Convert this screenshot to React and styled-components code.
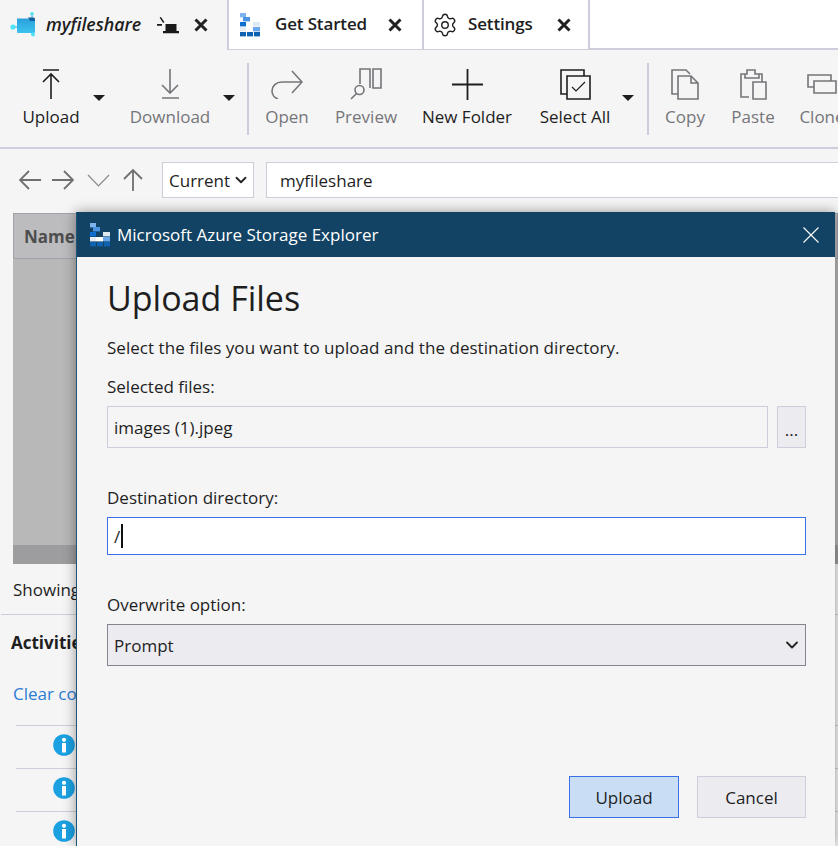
import React from "react";
import styled, { createGlobalStyle } from "styled-components";
import { Settings, ChevronDown } from "lucide-react";

const GlobalStyle = createGlobalStyle`
  html, body {
    margin: 0;
    padding: 0;
    background: #f5f5f5;
  }
  * {
    box-sizing: border-box;
  }
`;

const Page = styled.div`
  position: relative;
  width: 838px;
  height: 846px;
  overflow: hidden;
  background: #f5f5f5;
  color: #1e1e1e;
  font-family: "Open Sans", "Noto Sans", sans-serif;
  font-size: 17px;
`;

const TabBar = styled.div`
  display: flex;
  height: 50px;
  background: #fff;
  border-bottom: 2px solid #cdcddc;
`;

const Tab = styled.div`
  display: flex;
  align-items: center;
  flex: none;
  width: ${(p) => p.$w}px;
  height: ${(p) => (p.$active ? 50 : 49)}px;
  padding-left: ${(p) => p.$pad}px;
  background: ${(p) => (p.$active ? "#f5f5f5" : "#fff")};
  border-left: ${(p) => (p.$active ? "none" : "2px solid #cdcddc")};
  border-right: ${(p) => (p.$edge ? "2px solid #cdcddc" : "none")};
`;

const TabTitle = styled.span`
  width: ${(p) => p.$w}px;
  margin-left: ${(p) => p.$ml}px;
  font-size: ${(p) => (p.$italic ? 17.8 : 17)}px;
  font-weight: 600;
  font-style: ${(p) => (p.$italic ? "italic" : "normal")};
  letter-spacing: ${(p) => (p.$italic ? 0 : -0.15)}px;
  white-space: nowrap;
  margin-top: -2px;
`;

const TabGap = styled.span`
  width: 14px;
`;

const Toolbar = styled.div`
  display: flex;
  height: 99px;
  padding-left: 12px;
  border-bottom: 2px solid #cdcddc;
`;

const ToolButton = styled.div`
  display: flex;
  flex: none;
  flex-direction: column;
  align-items: center;
  width: ${(p) => p.$w}px;
  margin-left: ${(p) => p.$ml || 0}px;
  padding-top: 18px;
  color: ${(p) => (p.$off ? "#75757a" : "#1e1e1e")};
  white-space: nowrap;
`;

const ToolIcon = styled.div`
  display: flex;
  align-items: center;
  justify-content: center;
  height: 32px;
`;

const ToolLabel = styled.div`
  margin-top: 5px;
  line-height: 24px;
`;

const Caret = styled.div`
  flex: none;
  width: 18px;
  padding-top: 45px;
  display: flex;
  justify-content: center;

  &::after {
    content: "";
    border-left: 6px solid transparent;
    border-right: 6px solid transparent;
    border-top: 6px solid #1e1e1e;
    height: 0;
  }
`;

const ToolSep = styled.div`
  flex: none;
  width: 2px;
  height: 72px;
  margin: 13px 9px 0 ${(p) => p.$ml}px;
  background: #cdcddc;
`;

const AddressBar = styled.div`
  display: flex;
  align-items: center;
  height: 64px;
  padding: 0 0 2px 19px;
`;

const NavIcons = styled.div`
  display: flex;
  align-items: center;
  width: 143px;
`;

const NavSvg = styled.svg`
  flex: none;
  margin-left: ${(p) => p.$ml || 0}px;
`;

const ScopeSelect = styled.div`
  display: flex;
  align-items: center;
  gap: 2px;
  flex: none;
  width: 92px;
  height: 36px;
  padding-left: 6px;
  background: #fff;
  border: 1px solid #cdcddc;
`;

const PathInput = styled.div`
  display: flex;
  align-items: center;
  flex: 1;
  height: 36px;
  margin-left: 12px;
  padding-left: 13px;
  background: #fff;
  border: 1px solid #cdcddc;
  border-right: none;
`;

const Table = styled.div`
  display: flex;
  flex-direction: column;
  height: 351px;
  margin-left: 13px;
  background: #b8b8b8;
`;

const TableHead = styled.div`
  display: flex;
  align-items: center;
  height: 46px;
  padding: 1px 0 0 10px;
  background: #bcbcbe;
  border: 1px solid #a2a2a8;
  font-weight: 700;
  color: #4e4e4e;
`;

const TableBody = styled.div`
  flex: 1;
`;

const TableScroll = styled.div`
  height: 19px;
  background: #9d9da0;
`;

const Status = styled.div`
  height: 51px;
  padding: 14px 0 0 12px;
  line-height: 24px;
  border-bottom: 1px solid #cdcddc;
  margin-left: 1px;
`;

const ActivityTitle = styled.div`
  margin: 16px 0 0 11px;
  line-height: 24px;
  font-weight: 700;
  white-space: nowrap;
`;

const ClearLink = styled.div`
  margin: 27px 0 0 13px;
  line-height: 24px;
  color: #2b7cd3;
  white-space: nowrap;
`;

const ActivityList = styled.div`
  margin: 19px 0 0 16px;
`;

const ActivityRow = styled.div`
  height: 43px;
  padding: 8px 0 0 37px;
  border-top: 1px solid #cdcddc;
`;

const Dialog = styled.div`
  position: absolute;
  left: 76px;
  top: 212px;
  width: 759px;
  height: 634px;
  display: flex;
  flex-direction: column;
  background: #f5f5f5;
  border-left: 1px solid #1d5578;
  box-shadow: 0 0 12px rgba(0, 0, 0, 0.4);
`;

const DialogBar = styled.div`
  display: flex;
  align-items: center;
  flex: none;
  height: 45px;
  padding: 0 16px 0 13px;
  background: #124364;
  color: #fff;
`;

const DialogName = styled.div`
  flex: 1;
  margin-left: 6px;
`;

const DialogBody = styled.div`
  display: flex;
  flex-direction: column;
  flex: 1;
  padding: 0 29px 0 30px;
`;

const Heading = styled.h1`
  margin: 18px 0 0;
  font-size: 34px;
  font-weight: 400;
  line-height: 46px;
`;

const Intro = styled.div`
  margin-top: 15px;
  line-height: 24px;
  letter-spacing: 0.04px;
`;

const Label = styled.div`
  margin-top: ${(p) => p.$mt}px;
  line-height: 24px;
`;

const FileRow = styled.div`
  display: flex;
  gap: 9px;
  margin-top: 7px;
`;

const FileInput = styled.div`
  display: flex;
  align-items: center;
  flex: 1;
  height: 42px;
  padding-left: 6px;
  border: 1px solid #cdcddc;
`;

const BrowseButton = styled.div`
  display: flex;
  align-items: flex-end;
  justify-content: center;
  width: 29px;
  height: 42px;
  padding-bottom: 6px;
  background: #ecebf0;
  border: 1px solid #cdcddc;
`;

const DirInput = styled.div`
  display: flex;
  align-items: center;
  height: 38px;
  margin-top: 7px;
  padding-left: 6px;
  background: #fff;
  border: 1px solid #3b6fe6;
`;

const Cursor = styled.span`
  width: 2px;
  height: 24px;
  margin-left: 1px;
  background: #111;
`;

const OverwriteSelect = styled.div`
  display: flex;
  align-items: center;
  justify-content: space-between;
  height: 42px;
  margin-top: 7px;
  padding: 0 3px 0 6px;
  background: #ecebf0;
  border: 1px solid #85858f;
`;

const Actions = styled.div`
  display: flex;
  justify-content: flex-end;
  gap: 18px;
  margin-top: 110px;
`;

const ActionButton = styled.div`
  display: flex;
  align-items: center;
  justify-content: center;
  width: ${(p) => p.$w}px;
  height: 42px;
  background: ${(p) => (p.$primary ? "#c9def5" : "#ecebf0")};
  border: 1px solid ${(p) => (p.$primary ? "#3b6fe6" : "#cdcddc")};
`;

const CloseMark = () => (
  <svg width="14" height="14" viewBox="0 0 14 14" fill="none" stroke="#222" strokeWidth="3">
    <path d="M1.5 1.5 12.5 12.5M12.5 1.5 1.5 12.5" />
  </svg>
);

const ShareIcon = () => (
  <svg width="26" height="26" viewBox="0 0 26 26">
    <defs>
      <linearGradient id="shareFill" x1="0" y1="0" x2="0" y2="1">
        <stop offset="0" stopColor="#2a9fdc" />
        <stop offset="1" stopColor="#3cc3ee" />
      </linearGradient>
    </defs>
    <path d="M3 15h4M22 2v4M21 20l2 3" stroke="#2a9fdc" strokeWidth="1" fill="none" />
    <path d="M7 6.5h11l2 1.5h5v12a1 1 0 0 1-1 1H8a1 1 0 0 1-1-1z" fill="url(#shareFill)" />
    <path d="M18 5.5h5.5a1.5 1.5 0 0 1 1.5 1.5v2h-5z" fill="#125f9e" />
    <circle cx="3" cy="15" r="2.6" fill="#4fe3f8" />
    <circle cx="22" cy="1.8" r="1.8" fill="#4fe3f8" />
    <circle cx="23" cy="22.5" r="2" fill="#4fe3f8" />
  </svg>
);

const PinIcon = () => (
  <svg width="23" height="17" viewBox="0 0 23 17" fill="#1a1a1a">
    <path d="M6 14h16v2.2H6zM8.5 7h11v7h-11zM0 7h5v1.7H0zM2.6.6 3.9 0 7.4 5l-1.3.9z" />
  </svg>
);

// blocks of the storage explorer logo, [x, y, w, colour]
const logoBlocks = [
  [0, 0, 6, "#7db4ee"],
  [3, 4, 7, "#4a94e4"],
  [0, 9, 6, "#0f6fd0"],
  [13, 9, 7, "#dfe9f4"],
  [6, 14, 7, "#ffffff"],
  [13, 14, 7, "#6aa7ea"],
  [0, 19, 6, "#0f62b0"],
  [7, 19, 6, "#0f62b0"],
  [14, 19, 6, "#0f62b0"],
];

const StorageLogo = () => (
  <svg width="21" height="24" viewBox="0 0 21 24">
    {logoBlocks.map(([x, y, w, fill]) => (
      <rect key={`${x}-${y}`} x={x} y={y} width={w} height="4.4" fill={fill} />
    ))}
    <rect x="0" y="14" width="6" height="4.4" fill="#e6edf5" />
  </svg>
);

const line = { fill: "none", stroke: "currentColor", strokeWidth: 1.6 };

const UploadIcon = () => (
  <svg width="20" height="30" viewBox="0 0 20 30" {...line}>
    <path d="M2 1h16M10 30V5M2 13l8-8 8 8" />
  </svg>
);

const DownloadIcon = () => (
  <svg width="20" height="30" viewBox="0 0 20 30" {...line}>
    <path d="M2 29h17M10 0v24M2 16l8 8 8-8" />
  </svg>
);

const OpenIcon = () => (
  <svg width="32" height="30" viewBox="0 0 32 30" {...line}>
    <path d="M30 13H11C5 13 1 17 1 22c0 4 3 7 6 8M21 2l10 11-10 11" />
  </svg>
);

const PreviewIcon = () => (
  <svg width="32" height="32" viewBox="0 0 32 32" {...line}>
    <path d="M10 16V1h10v19M23 1h8v19h-8zM1 31l6-6" />
    <circle cx="9.5" cy="22" r="4.5" />
  </svg>
);

const PlusIcon = () => (
  <svg width="31" height="31" viewBox="0 0 31 31" {...line} strokeWidth="1.8">
    <path d="M15.5 0v31M0 15.5h31" />
  </svg>
);

const SelectAllIcon = () => (
  <svg width="31" height="31" viewBox="0 0 31 31" {...line}>
    <path d="M7 25H1V1h23v6" />
    <path d="M7 7h23v23H7z" />
    <path d="M12 18l4 4 9-9" strokeWidth="1.2" />
  </svg>
);

const CopyIcon = () => (
  <svg width="28" height="31" viewBox="0 0 28 31" {...line}>
    <path d="M7 25H1V1h14l4 4" />
    <path d="M7 7h13l7 7v16H7zM20 7v7h7" />
  </svg>
);

const PasteIcon = () => (
  <svg width="27" height="31" viewBox="0 0 27 31" {...line}>
    <path d="M9 28H1V5h6V1h8v4h7v8M5 5v4h14V5" />
    <path d="M13 13h13v17H13z" />
  </svg>
);

const CloneIcon = () => (
  <svg width="30" height="20" viewBox="0 0 30 20" {...line}>
    <path d="M7 13H1V1h23v6" />
    <path d="M7 7h22v12H7z" />
  </svg>
);

const NavArrow = ({ d, w, ml, thin }) => (
  <NavSvg
    $ml={ml}
    width={w}
    height="24"
    viewBox={`0 0 ${w} 24`}
    fill="none"
    stroke={thin ? "#8a8a8a" : "#707070"}
    strokeWidth={thin ? 1.2 : 1.8}
  >
    <path d={d} />
  </NavSvg>
);

const InfoIcon = () => (
  <svg width="22" height="22" viewBox="0 0 22 22">
    <circle cx="11" cy="11" r="10.8" fill="#1ba1e2" />
    <rect x="9" y="9" width="4" height="9.5" fill="#fff" />
    <circle cx="11" cy="5.8" r="2.1" fill="#fff" />
  </svg>
);

const CloseThin = () => (
  <svg width="16" height="16" viewBox="0 0 16 16" stroke="#fff" strokeWidth="1.1">
    <path d="M.5.5l15 15M15.5.5l-15 15" />
  </svg>
);

export default function App() {
  return (
    <Page>
      <GlobalStyle />
      <TabBar>
        <Tab $active $w={227} $pad={10}>
          <ShareIcon />
          <TabTitle $italic $w={111} $ml={10}>myfileshare</TabTitle>
          <PinIcon />
          <TabGap />
          <CloseMark />
        </Tab>
        <Tab $w={195} $pad={11}>
          <StorageLogo />
          <TabTitle $w={113} $ml={14}>Get Started</TabTitle>
          <CloseMark />
        </Tab>
        <Tab $edge $w={168} $pad={8}>
          <Settings size={26} strokeWidth={1.3} color="#222" />
          <TabTitle $w={89} $ml={10}>Settings</TabTitle>
          <CloseMark />
        </Tab>
      </TabBar>
      <Toolbar>
        <ToolButton $w={78}>
          <ToolIcon><UploadIcon /></ToolIcon>
          <ToolLabel>Upload</ToolLabel>
        </ToolButton>
        <Caret />
        <ToolButton $off $w={100} $ml={12}>
          <ToolIcon><DownloadIcon /></ToolIcon>
          <ToolLabel>Download</ToolLabel>
        </ToolButton>
        <Caret />
        <ToolSep $ml={9} />
        <ToolButton $off $w={58}>
          <ToolIcon><OpenIcon /></ToolIcon>
          <ToolLabel>Open</ToolLabel>
        </ToolButton>
        <ToolButton $off $w={100}>
          <ToolIcon><PreviewIcon /></ToolIcon>
          <ToolLabel>Preview</ToolLabel>
        </ToolButton>
        <ToolButton $w={102}>
          <ToolIcon><PlusIcon /></ToolIcon>
          <ToolLabel>New Folder</ToolLabel>
        </ToolButton>
        <ToolButton $w={88} $ml={13}>
          <ToolIcon><SelectAllIcon /></ToolIcon>
          <ToolLabel>Select All</ToolLabel>
        </ToolButton>
        <Caret />
        <ToolSep $ml={10} />
        <ToolButton $off $w={54}>
          <ToolIcon><CopyIcon /></ToolIcon>
          <ToolLabel>Copy</ToolLabel>
        </ToolButton>
        <ToolButton $off $w={82}>
          <ToolIcon><PasteIcon /></ToolIcon>
          <ToolLabel>Paste</ToolLabel>
        </ToolButton>
        <ToolButton $off $w={60} $ml={-2}>
          <ToolIcon><CloneIcon /></ToolIcon>
          <ToolLabel>Clone</ToolLabel>
        </ToolButton>
      </Toolbar>
      <AddressBar>
        <NavIcons>
          <NavArrow w={22} d="M22 12H1M10 3l-9 9 9 9" />
          <NavArrow w={22} ml={11} d="M0 12h21M12 3l9 9-9 9" />
          <NavArrow w={23} ml={13} thin d="M1 7l10.5 11L22 7" />
          <NavArrow w={20} ml={13} d="M10 23V2M1 11l9-9 9 9" />
        </NavIcons>
        <ScopeSelect>
          Current
          <ChevronDown size={18} strokeWidth={2.4} color="#222" />
        </ScopeSelect>
        <PathInput>myfileshare</PathInput>
      </AddressBar>
      <Table>
        <TableHead>Name</TableHead>
        <TableBody />
        <TableScroll />
      </Table>
      <Status>Showing</Status>
      <ActivityTitle>Activities</ActivityTitle>
      <ClearLink>Clear completed</ClearLink>
      <ActivityList>
        <ActivityRow><InfoIcon /></ActivityRow>
        <ActivityRow><InfoIcon /></ActivityRow>
        <ActivityRow><InfoIcon /></ActivityRow>
      </ActivityList>
      <Dialog>
        <DialogBar>
          <StorageLogo />
          <DialogName>Microsoft Azure Storage Explorer</DialogName>
          <CloseThin />
        </DialogBar>
        <DialogBody>
          <Heading>Upload Files</Heading>
          <Intro>Select the files you want to upload and the destination directory.</Intro>
          <Label $mt={15}>Selected files:</Label>
          <FileRow>
            <FileInput>images (1).jpeg</FileInput>
            <BrowseButton>...</BrowseButton>
          </FileRow>
          <Label $mt={38}>Destination directory:</Label>
          <DirInput>
            /<Cursor />
          </DirInput>
          <Label $mt={38}>Overwrite option:</Label>
          <OverwriteSelect>
            Prompt
            <ChevronDown size={20} strokeWidth={2.2} color="#222" />
          </OverwriteSelect>
          <Actions>
            <ActionButton $primary $w={110}>Upload</ActionButton>
            <ActionButton $w={109}>Cancel</ActionButton>
          </Actions>
        </DialogBody>
      </Dialog>
    </Page>
  );
}
